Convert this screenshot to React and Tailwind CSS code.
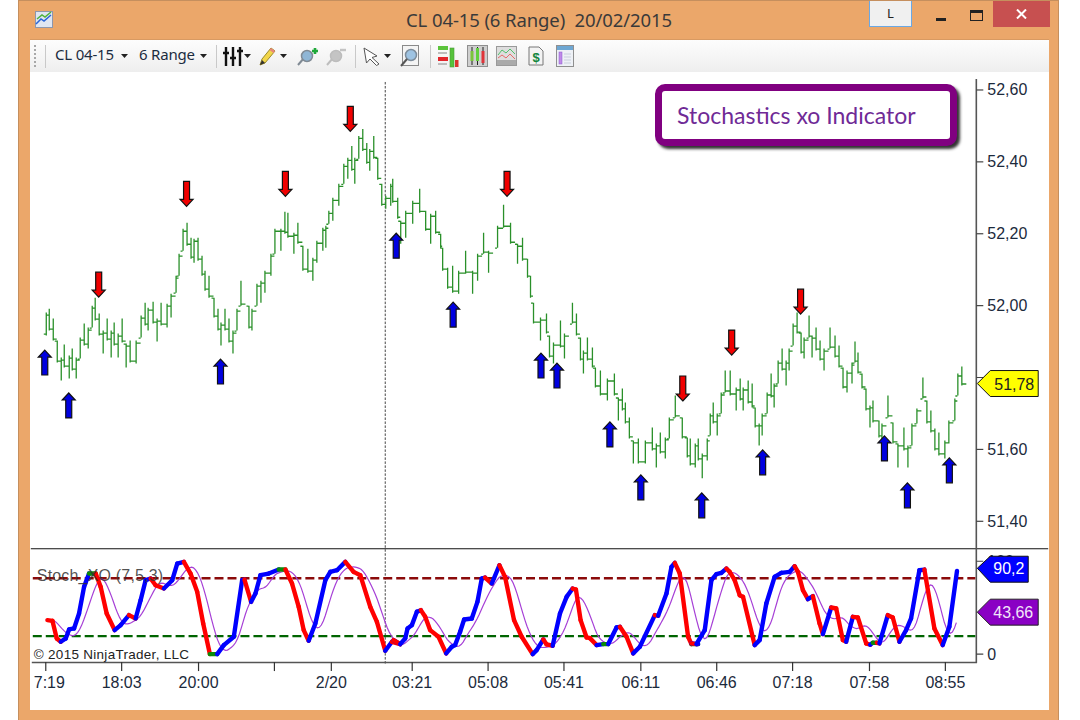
const BARS = [[45,312,335],[48,308,330],[52,318,340],[56,340,362],[60,357,380],[63,344,367],[68,355,378],[71,348,370],[75,357,378],[79,337,358],[83,323,345],[87,327,348],[91,305,327],[94,297,320],[98,313,335],[102,330,353],[106,318,340],[110,330,357],[113,322,345],[117,333,357],[121,318,342],[125,343,367],[129,340,362],[135,340,363],[140,315,337],[144,302,325],[147,307,330],[152,301,323],[156,318,341],[160,302,325],[166,303,327],[170,293,317],[175,275,292],[178,253,275],[182,228,250],[186,222,245],[190,237,258],[193,238,262],[197,237,260],[201,255,275],[204,270,290],[208,275,297],[213,297,317],[217,308,330],[220,322,345],[224,308,330],[228,318,342],[232,330,353],[236,308,330],[240,280,305],[248,305,328],[251,308,330],[256,283,305],[260,280,302],[264,270,292],[270,253,275],[274,228,253],[280,228,250],[284,211,233],[287,212,237],[293,232,253],[297,222,243],[302,245,270],[307,248,272],[312,257,280],[316,240,262],[322,227,250],[325,225,247],[328,210,223],[332,197,220],[338,183,205],[343,163,183],[347,157,178],[351,145,170],[354,157,183],[358,135,158],[362,128,150],[366,142,163],[369,148,170],[373,135,158],[377,157,179],[381,183,205],[385,195,208],[390,183,205],[392,178,202],[397,197,218],[400,220,243],[405,210,237],[412,200,223],[419,188,212],[425,210,230],[430,213,243],[435,210,233],[440,233,247],[442,247,270],[447,267,288],[452,265,292],[458,270,293],[465,250,273],[472,270,293],[477,253,280],[483,232,253],[488,250,272],[497,225,247],[503,204,227],[510,222,243],[517,243,263],[522,237,260],[527,258,277],[530,275,297],[533,302,323],[540,317,340],[546,313,333],[549,335,357],[553,342,363],[560,320,347],[564,333,358],[572,302,323],[576,313,335],[580,337,360],[583,350,373],[587,337,360],[592,347,367],[595,367,387],[600,370,395],[607,378,400],[614,373,395],[618,397,420],[622,388,410],[625,402,423],[629,417,438],[633,440,463],[638,438,463],[645,440,463],[652,427,450],[656,443,467],[660,432,453],[665,437,458],[669,417,438],[675,395,417],[682,417,438],[687,437,457],[690,438,465],[695,443,467],[698,438,460],[702,453,478],[707,438,460],[710,413,435],[713,402,423],[717,413,435],[721,392,413],[725,370,392],[730,370,395],[736,387,410],[740,378,400],[743,387,410],[748,380,403],[752,383,407],[755,407,427],[759,423,445],[762,413,435],[767,392,413],[771,373,397],[774,383,407],[778,360,383],[782,348,370],[786,360,385],[789,348,370],[793,323,345],[797,312,333],[801,332,353],[804,337,358],[809,315,337],[812,335,357],[816,327,350],[820,340,360],[824,348,370],[830,327,348],[835,335,357],[839,345,367],[843,367,388],[847,370,392],[852,362,383],[855,341,362],[858,352,373],[862,373,388],[866,388,410],[870,405,427],[873,400,422],[879,420,437],[882,423,443],[888,395,417],[893,422,443],[898,443,467],[904,427,450],[908,445,467],[912,423,445],[917,408,423],[923,377,398],[927,400,423],[931,410,432],[935,428,450],[939,432,455],[945,440,458],[949,420,443],[955,398,420],[958,373,395],[962,366,385]];

function barPath() {
  let d = "";
  let prevClose = null;
  BARS.forEach(([x, t, b], i) => {
    const n = BARS[i + 1];
    const close = n ? ((n[1] + n[2]) / 2 < (t + b) / 2 ? t + 2 : b - 2) : b - 2;
    const open = prevClose === null ? b - 2 : Math.min(b, Math.max(t, prevClose));
    const len = n ? Math.min(n[0] - x - 1, 4) : 4;
    d += `M${x + 0.5} ${t}V${b}M${x - 2} ${open + 0.5}H${x}M${x + 1} ${close + 0.5}H${x + 1 + len}`;
    prevClose = close;
  });
  return d;
}

const UP = [[44,349],[68,392],[220,358],[396,232],[453,301],[541,352],[557,362],[610,421],[641,474],[702,492],[763,449],[885,435],[908,482],[950,457]];
const DOWN = [[98,271],[186,180],[285,170],[350,105],[507,170],[683,375],[732,329],[801,288]];

const z3 = [[80,270],[95,272],[108,325],[120,335],[135,325],[145,298],[160,295],[175,250],[190,170],[205,130],[225,130],[240,170],[258,250],[282,300],[300,285],[325,255],[345,265],[360,210],[375,150],[390,145],[405,165],[430,175],[455,150],[470,100],[490,95],[510,130],[530,185],[548,280],[568,372],[590,372],[610,345],[640,320],[665,150],[672,148],[692,215],[705,190],[720,135],[745,130],[775,118],[795,118],[815,160],[835,230],[850,300],[865,332],[885,280],[915,150],[930,125],[950,120],[975,95],[1000,125],[1020,135],[1050,230],[1070,275],[1095,362],[1115,335],[1140,342]].map(([x,y])=>[x/3+20,y/3+530]);
const z8 = [[10,270],[30,282],[45,265],[52,235],[65,225],[80,185],[92,180],[105,200],[120,240],[145,260],[168,310],[185,290],[195,285],[210,245],[222,208],[245,205],[262,155],[275,85],[285,82],[305,100],[328,45],[345,80],[372,210],[395,260],[428,312],[440,300],[460,268],[470,283],[488,287],[510,190],[530,140],[548,115],[558,118],[572,210],[590,262],[600,264],[620,285],[640,282],[655,282],[680,232],[690,230],[710,260],[730,310],[750,290],[795,195],[805,197],[830,130],[845,50],[855,38],[870,70],[895,260],[905,282],[925,282]].map(([x,y])=>[x/3+390,y/3+550]);
const z4 = [[35,340],[50,342],[75,300],[95,150],[110,132],[125,128],[140,115],[150,125],[165,150],[180,195],[190,200],[225,345],[240,330],[260,220],[285,140],[305,128],[330,125],[345,108],[355,125],[370,180],[385,207],[400,198],[420,280],[430,312],[455,232],[470,235],[490,330],[500,335],[520,260],[535,262],[560,340],[572,344],[580,338],[592,338],[600,340],[625,255],[640,262],[660,335],[680,300],[695,265],[720,120],[735,118],[765,295],[790,345],[810,290],[833,122]].map(([x,y])=>[x/3+680,y/3+530]);
const STOCH = [...z3, ...z8, ...z4];

function stochAt(x) {
  if (x <= STOCH[0][0]) return STOCH[0][1];
  for (let i = 1; i < STOCH.length; i++) {
    if (x <= STOCH[i][0]) {
      const [a, b] = STOCH[i - 1], [c, d] = STOCH[i];
      return b + ((d - b) * (x - a)) / (c - a || 1);
    }
  }
  return STOCH[STOCH.length - 1][1];
}
function signalPath() {
  let d = "";
  for (let x = 45; x <= 958; x += 2) {
    let s = 0, n = 0;
    for (let k = 0; k <= 18; k += 1) { s += stochAt(x - k); n++; }
    d += `${d ? "L" : "M"}${x} ${(s / n).toFixed(1)}`;
  }
  return d;
}

const PRICE = [["52,60",89],["52,40",161],["52,20",233],["52,00",305],["51,60",449],["51,40",521]];
const TIME = [[121,"18:03"],[198,"20:00"],[331,"2/20"],[412,"03:21"],[488,"05:08"],[564,"05:41"],[641,"06:11"],[717,"06:46"],[793,"07:18"],[870,"07:58"],[946,"08:55"]];
const TICKS = [45,121,198,274,331,412,488,564,641,717,793,870,946];

function Caret({ className = "" }) {
  return <svg width="7" height="4" viewBox="0 0 7 4" className={className}><path d="M0 0H7L3.5 4Z" fill="#222" /></svg>;
}
function Sep({ className = "" }) {
  return <div className={`w-px h-[23px] bg-[#c9c9c9] ${className}`} />;
}
const Ico = ({ w = 22, h = 22, children, className = "" }) => (
  <svg width={w} height={h} viewBox={`0 0 ${w} ${h}`} className={`shrink-0 ${className}`}>{children}</svg>
);

function Pin({ grey, plus }) {
  const c = grey ? "#c4c4c4" : "#8fb6d6";
  const s = grey ? "#bdbdbd" : "#808a94";
  return (
    <Ico w={22} h={20}>
      <path d="M2 19L8 12" stroke={s} strokeWidth="2" />
      <circle cx="11" cy="10" r="5.5" fill={c} stroke={s} strokeWidth="1.5" />
      {plus ? <path d="M16 5H22M19 2V8" stroke="#1fa83a" strokeWidth="2.6" /> : null}
      {grey ? <path d="M15 4H21" stroke="#c4c4c4" strokeWidth="2.4" /> : null}
    </Ico>
  );
}
function PageGlass() {
  return (
    <Ico w={20} h={24}>
      <rect x="2.5" y="1.5" width="16" height="20" fill="#f4f4f4" stroke="#8a8a8a" />
      <circle cx="11" cy="11" r="5.5" fill="#9ec3e2" stroke="#7d8c9a" strokeWidth="1.5" />
      <path d="M1 22L7 15" stroke="#555" strokeWidth="2" />
    </Ico>
  );
}

function Toolbar() {
  return (
    <div className="h-[32px] shrink-0 flex items-center bg-gradient-to-b from-[#fdfdfd] to-[#eeeeee] text-[15px] text-[#1c2c40] font-['Noto_Sans',sans-serif]">
      <div className="ml-[4px] w-[2px] h-[22px] border-l-2 border-dotted border-[#a8a8a8]" />
      <Sep className="ml-[9px]" />
      <span className="ml-[9px] mb-[3px] w-[59px] whitespace-nowrap tracking-[-0.2px]">CL 04-15</span>
      <Caret className="ml-[7px]" />
      <span className="ml-[11px] mb-[3px] w-[54px] whitespace-nowrap tracking-[-0.2px]">6 Range</span>
      <Caret className="ml-[7px]" />
      <Sep className="ml-[9px]" />
      <Ico w={24} h={22} className="ml-[5px]">
        <path d="M4 2V21M11 2V21M18 2V21" stroke="#111" strokeWidth="2.4" />
        <path d="M1 8H7M8 13H14M15 6H21" stroke="#111" strokeWidth="2.4" />
      </Ico>
      <Caret className="-ml-[2px]" />
      <Ico w={18} h={22} className="ml-[7px]">
        <path d="M2 20L4 14L13 3L17 6L7 18Z" fill="#f2d64a" stroke="#9a8a2a" />
        <path d="M13 3L17 6L15.5 8L11.5 5Z" fill="#e8867a" />
        <path d="M2 20L4 15L7 18Z" fill="#333" />
      </Ico>
      <Caret className="ml-[4px]" />
      <div className="ml-[9px]"><Pin plus /></div>
      <div className="ml-[7px]"><Pin grey /></div>
      <Sep className="ml-[8px]" />
      <Ico w={19} h={20} className="ml-[6px]">
        <path d="M2 2L15 10L10 11.5L17 18L14.5 19.5L8 13L4.5 17Z" fill="#fff" stroke="#555" />
      </Ico>
      <Caret className="ml-[3px]" />
      <div className="ml-[9px]"><PageGlass /></div>
      <Sep className="ml-[10px]" />
      <Ico w={22} h={24} className="ml-[6px]">
        <path d="M1 4H11" stroke="#5cc43c" strokeWidth="4" />
        <path d="M1 15H11" stroke="#e3262c" strokeWidth="4" />
        <rect x="13" y="4" width="4" height="19" fill="#55c23a" stroke="#4a9a3a" strokeWidth=".6" />
        <rect x="18" y="16" width="3.5" height="7" fill="#d9352f" />
        <path d="M1 9H10M1 20H10" stroke="#aaa" strokeWidth="1.5" />
      </Ico>
      <Ico w={21} h={22} className="ml-[8px]">
        <rect x=".5" y=".5" width="20" height="21" fill="#cfcfcf" stroke="#8f8f8f" />
        <path d="M5 2V20M10.5 2V20M16 2V20" stroke="#222" />
        <rect x="3.5" y="6" width="3" height="10" fill="#7cc43c" />
        <rect x="9" y="3" width="3" height="13" fill="#62d03c" />
        <rect x="14.5" y="6" width="3" height="12" fill="#e0343a" />
      </Ico>
      <Ico w={21} h={20} className="ml-[8px]">
        <rect x=".5" y=".5" width="20" height="19" fill="#dedede" stroke="#9a9a9a" />
        <rect x="1" y="14" width="19" height="5" fill="#aaaaaa" />
        <path d="M2 9L6 4L10 7L14 3L19 8" stroke="#4fc06a" fill="none" />
        <path d="M2 12L6 9L10 12L14 8L19 13" stroke="#e76a6a" fill="none" />
      </Ico>
      <Ico w={16} h={20} className="ml-[11px]">
        <path d="M1 1H11L15 5V19H1Z" fill="#f3f3f3" stroke="#777" />
        <text x="8" y="15.5" textAnchor="middle" fontSize="13" fontWeight="700" fill="#12863c" fontFamily="Liberation Sans, sans-serif">$</text>
      </Ico>
      <Ico w={18} h={22} className="ml-[12px]">
        <rect x=".5" y=".5" width="17" height="21" fill="#eef1f6" stroke="#8f8f8f" />
        <rect x="1" y="1" width="16" height="4" fill="#6ea7d3" />
        <rect x="3" y="7" width="3" height="12" fill="#c08ae8" stroke="#8a5ad0" strokeWidth=".5" />
        <path d="M8 9H15M8 12H15M8 15H15M8 18H15" stroke="#c8cfdc" />
      </Ico>
    </div>
  );
}

function Chart() {
  const font = "Liberation Sans, Arial, sans-serif";
  return (
    <svg width="1019" height="639" viewBox="30 71 1019 639" className="block" fontFamily={font} fontSize="16" fill="#1c2a3c">
      <path d="M385 81V664" stroke="#444" strokeDasharray="2.5 1.5" strokeWidth="1" />
      <path d={barPath()} stroke="#2a902a" strokeWidth="1.3" fill="none" />
      {UP.map(([x, y]) => (
        <path key={`u${x}`} d={`M${x} ${y + 0.5}L${x + 6.5} ${y + 7.5}H${x + 3}V${y + 25.5}H${x - 3}V${y + 7.5}H${x - 6.5}Z`} fill="#0000e0" stroke="#111" strokeWidth="1.2" />
      ))}
      {DOWN.map(([x, y]) => (
        <path key={`d${x}`} d={`M${x} ${y + 25.5}L${x + 6.5} ${y + 18.5}H${x + 3}V${y + 0.5}H${x - 3}V${y + 18.5}H${x - 6.5}Z`} fill="#f00000" stroke="#111" strokeWidth="1.2" />
      ))}
      <path d="M30 548.5H1049" stroke="#111" strokeWidth="1.2" />
      <path d="M977 78V662.5H31" stroke="#555" strokeWidth="1.6" fill="none" />
      {PRICE.map(([t, y]) => (
        <g key={t}>
          <path d={`M977 ${y}H984`} stroke="#444" strokeWidth="1.2" />
          <text x="988" y={y + 5.5}>{t}</text>
        </g>
      ))}
      <path d="M977 377H984M977 561H984M977 654H984" stroke="#444" strokeWidth="1.2" />
      <text x="988" y="660">0</text>
      <text x="988" y="567">100</text>
      {TICKS.map((x) => <path key={x} d={`M${x} 662V671`} stroke="#333" strokeWidth="1.2" />)}
      <text x="33" y="688">7:19</text>
      {TIME.map(([x, t]) => <text key={t} x={x} y="688" textAnchor="middle">{t}</text>)}

      <path d="M32 578H976" stroke="#8b0a0a" strokeWidth="2.4" strokeDasharray="9 4" />
      <path d="M32 636H976" stroke="#006400" strokeWidth="2.4" strokeDasharray="9 4" />
      <path d={signalPath()} stroke="#a63fd6" strokeWidth="1.2" fill="none" />
      {STOCH.slice(1).map(([x, y], i) => {
        const [a, b] = STOCH[i];
        const dy = y - b;
        const c = Math.abs(dy) < 0.4 ? "#0a8a0a" : dy < 0 ? "#0000ff" : "#ff0000";
        return <line key={i} x1={a} y1={b} x2={x} y2={y} stroke={c} strokeWidth="4.4" strokeLinecap="round" />;
      })}
      <text x="36" y="581" fill="#333" letterSpacing=".2" fillOpacity=".85">Stoch_XO (7,5,3)</text>
      <text x="33" y="659" fontSize="13.5" fill="#222" letterSpacing=".3">© 2015 NinjaTrader, LLC</text>

      <path d="M978 568L991 556H1029V582H991Z" fill="#0000ff" stroke="#111" />
      <text x="994" y="574" fill="#fff">90,2</text>
      <path d="M978 612L991 599H1039V625H991Z" fill="#8a00c4" stroke="#222" />
      <text x="994" y="618" fill="#f2e6f8">43,66</text>
      <path d="M978 383L991 370H1039V396H991Z" fill="#ffff00" stroke="#111" />
      <text x="995" y="389" fill="#222">51,78</text>
    </svg>
  );
}

export default function App() {
  return (
    <div className="w-[1080px] h-[720px] bg-white overflow-hidden">
      <div className="relative ml-[18px] w-[1041px] h-[720px] bg-[#EBA76A] border-[#c58f5e] border-x border-t flex flex-col">
        <div className="h-[38px] shrink-0 flex items-start pl-[16px]">
          <svg width="18" height="17" viewBox="0 0 18 17" className="mt-[10px] shrink-0">
            <rect width="17" height="16" x=".5" y=".5" fill="#dfe6f2" stroke="#8d97ad" />
            <path d="M1 13L6 8L9 10L16 4" stroke="#2a66d8" strokeWidth="1.5" fill="none" />
            <path d="M2 8L7 4L10 6L16 1" stroke="#4fb23c" strokeWidth="1.5" fill="none" />
          </svg>
          <div className="flex-1 text-center pt-[8px] pl-[156px] text-[18.5px] leading-[22px] text-[#3a3a3a] font-['Noto_Sans',sans-serif] tracking-[-0.1px] whitespace-pre">CL 04-15 (6 Range)  20/02/2015</div>
          <div className="w-[43px] h-[26px] mr-[24px] border border-[#6aa8e4] border-t-0 bg-[#f0f0f0] flex items-center justify-center text-[13px] text-[#222] font-['Noto_Sans',sans-serif]">L</div>
          <div className="mt-[17px] w-[10px] h-[2.5px] bg-[#222] mr-[24px]" />
          <div className="mt-[9px] w-[13px] h-[11px] border border-[#222] border-t-[3px] mr-[10px]" />
          <div className="w-[57px] h-[26px] mr-[8px] bg-[#C75050] flex items-center justify-center">
            <svg width="11" height="10" viewBox="0 0 11 10"><path d="M1 0.5L10 9.5M10 0.5L1 9.5" stroke="#fff" strokeWidth="2" /></svg>
          </div>
        </div>
        <div className="relative ml-[11px] w-[1019px] h-[671px] bg-white border-t border-[#d89a62] flex flex-col">
          <Toolbar />
          <Chart />
          <div className="absolute left-[625px] top-[44px] w-[302px] h-[62px] rounded-[10px] border-[7px] border-[#800080] bg-white shadow-[3px_3px_3px_#333] flex items-center pl-[15px] text-[23px] text-[#6f2a96] font-['Lato',sans-serif] whitespace-nowrap">
            Stochastics xo Indicator
          </div>
        </div>
      </div>
    </div>
  );
}
